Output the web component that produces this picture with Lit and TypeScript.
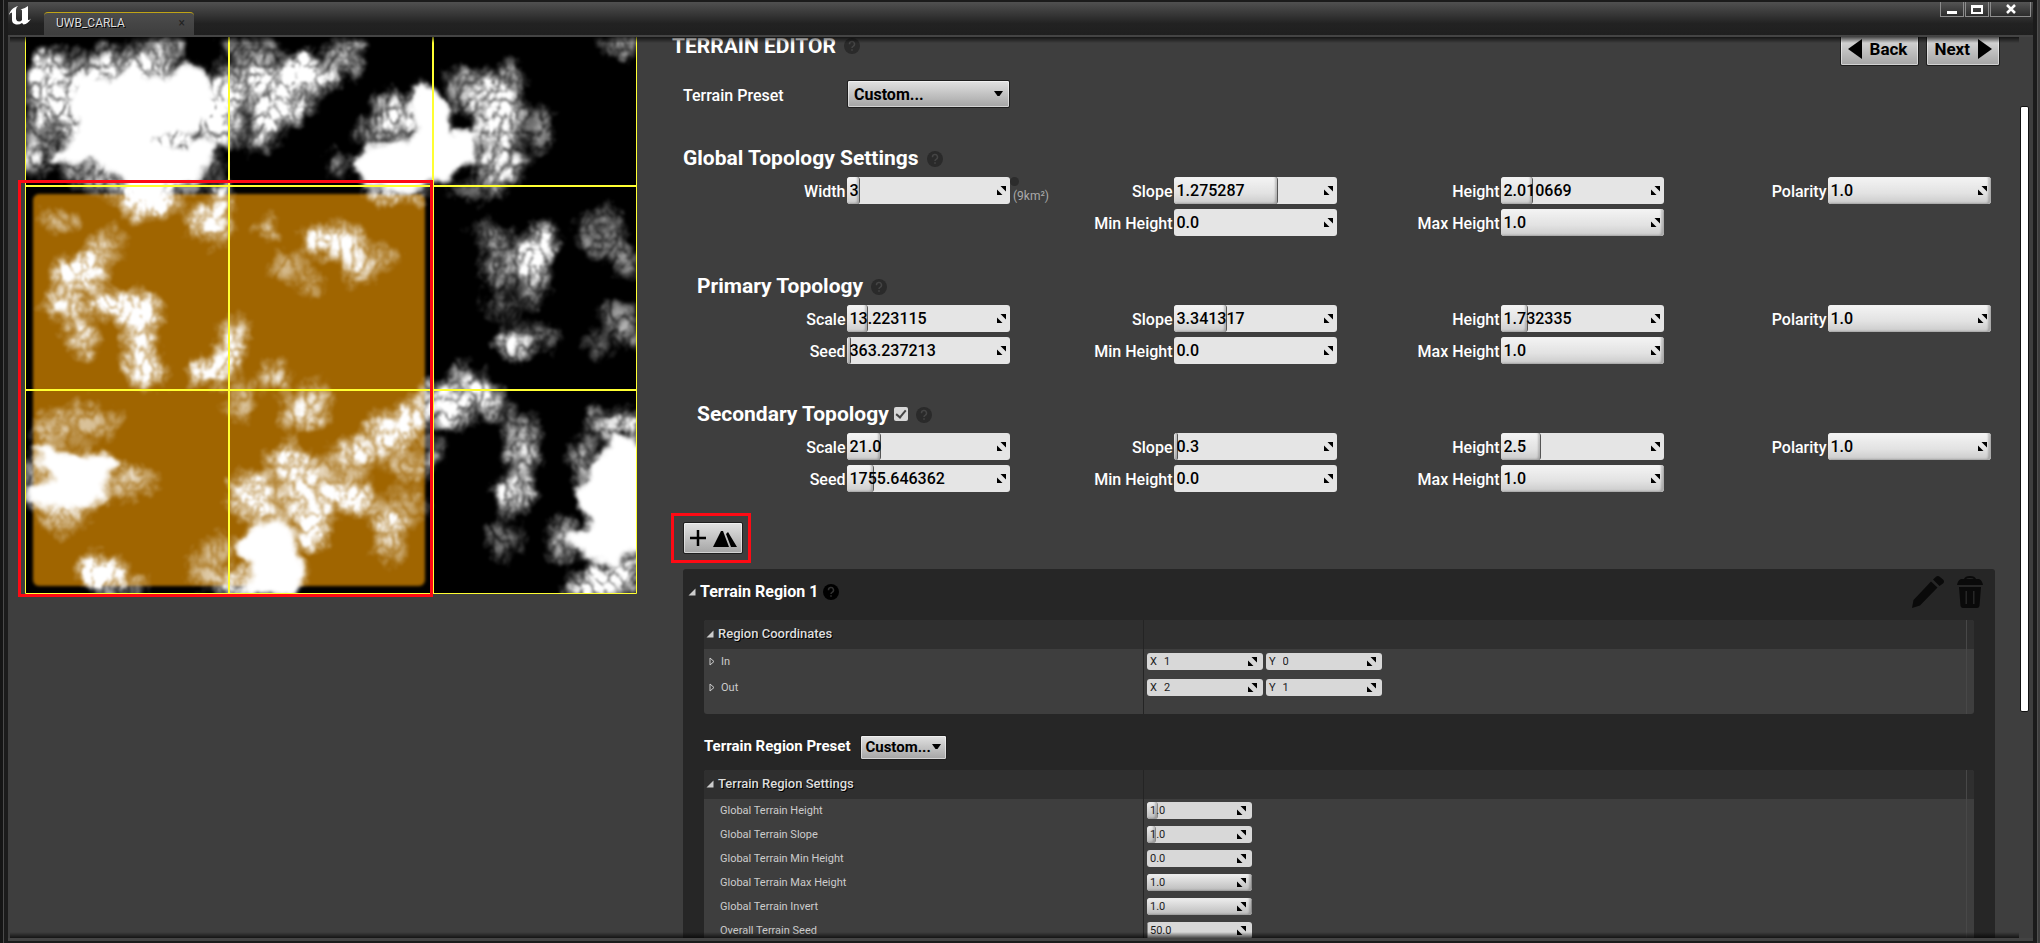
import { LitElement, html, css, svg, nothing } from "lit";
import { customElement } from "lit/decorators.js";

type Blob = [number, number, number, number, number];

const UPPER_SHAPES = [
  "M165,290 L175,235 L215,215 L250,245 L310,210 L350,235 L420,215 L445,180 L490,205 L510,270 L500,330 L465,390 L400,400 L350,425 L440,440 L480,405 L510,440 L490,500 L470,550 L400,560 L390,600 L350,615 L300,570 L290,535 L240,490 L160,490 L120,480 L150,430 L190,370 L170,330Z",
  "M830,500 L870,440 L960,420 L990,390 L970,320 L1000,240 L1030,260 L1080,330 L1070,400 L1135,390 L1130,480 L1070,530 L1020,560 L950,580 L870,550Z",
];
const UPPER_BLOBS: Blob[] = [
  [105, 260, 42, 100, 0.75], [380, 150, 60, 55, 0.6], [530, 300, 40, 100, 0.8], [90, 420, 45, 90, 0.45],
  [80, 480, 30, 40, 0.45], [520, 380, 40, 60, 0.7], [130, 200, 50, 60, 0.45], [260, 180, 90, 40, 0.45],
  [650, 240, 50, 40, 0.9], [720, 210, 42, 44, 1], [765, 240, 36, 26, 1], [820, 170, 50, 60, 0.5],
  [660, 330, 55, 45, 1], [635, 410, 25, 40, 0.65], [600, 150, 70, 50, 0.45], [700, 300, 50, 60, 0.6],
  [590, 250, 40, 60, 0.6], [590, 400, 60, 60, 0.3], [310, 330, 190, 150, 0.7], [330, 500, 190, 90, 0.5],
  [1180, 340, 65, 110, 0.7], [930, 320, 40, 50, 0.55], [1190, 500, 60, 60, 0.65], [1285, 390, 28, 70, 0.45],
  [800, 490, 30, 34, 0.45], [1210, 240, 40, 50, 0.45], [1480, 130, 55, 34, 0.55], [960, 360, 60, 60, 0.6],
  [1110, 260, 60, 60, 0.5], [890, 400, 50, 40, 0.5],
  [1270, 775, 36, 48, 1], [1270, 775, 24, 30, 1], [1290, 715, 38, 50, 0.7], [1190, 780, 50, 90, 0.45], [1270, 860, 30, 40, 0.6],
  [1430, 700, 60, 80, 0.4], [1490, 790, 30, 50, 0.45], [1150, 690, 40, 30, 0.35], [1130, 570, 70, 30, 0.35],
  [355, 600, 70, 50, 1], [485, 660, 42, 42, 0.85], [525, 600, 25, 46, 0.8], [140, 660, 50, 34, 0.42],
  [630, 685, 30, 30, 0.6], [770, 715, 52, 40, 0.95], [830, 730, 35, 50, 0.7], [850, 810, 34, 44, 0.65],
  [680, 800, 40, 44, 0.42], [740, 850, 25, 50, 0.4], [910, 770, 35, 44, 0.42], [185, 820, 58, 42, 1],
  [185, 820, 40, 26, 1], [222, 775, 26, 34, 1], [260, 730, 40, 60, 0.34], [520, 700, 30, 40, 0.5], [940, 580, 70, 30, 0.7],
];
const LOWER_SHAPES = [
  "M85,445 L120,440 L140,465 L250,460 L285,490 L250,540 L250,590 L210,630 L65,610 L62,560 L130,545 L95,500Z",
  "M560,740 L600,670 L660,650 L700,690 L730,830 L700,860 L690,890 L570,890 L600,820Z",
  "M1530,430 L1465,395 L1420,470 L1365,590 L1400,670 L1345,700 L1385,780 L1450,800 L1530,740Z",
];
const LOWER_BLOBS: Blob[] = [
  [150, 10, 44, 40, 0.75], [245, 10, 32, 34, 1], [325, 32, 58, 50, 1], [325, 36, 44, 36, 1], [195, 110, 35, 56, 0.7],
  [335, 130, 38, 80, 0.72], [345, 215, 46, 50, 0.75], [545, 160, 27, 46, 1], [493, 212, 36, 36, 1],
  [560, 95, 34, 50, 0.5], [655, 230, 36, 42, 0.6], [750, 310, 36, 66, 0.6], [700, 340, 36, 50, 0.55],
  [570, 300, 36, 66, 0.42], [200, 365, 90, 54, 0.4], [110, 390, 40, 40, 0.4], [150, 540, 120, 100, 0.45],
  [310, 545, 50, 54, 0.5], [150, 655, 55, 44, 0.5], [240, 815, 52, 48, 1], [240, 820, 34, 30, 1], [290, 860, 70, 40, 0.4],
  [485, 810, 40, 50, 0.42], [520, 740, 40, 40, 0.42], [685, 485, 48, 54, 0.7], [595, 580, 50, 60, 0.9],
  [730, 560, 44, 64, 0.7], [825, 590, 62, 38, 1], [855, 615, 30, 26, 0.9], [745, 680, 34, 72, 1],
  [920, 670, 30, 46, 0.7], [930, 745, 44, 50, 0.42], [925, 395, 56, 60, 0.75], [980, 350, 44, 54, 0.7],
  [840, 450, 42, 30, 0.85], [930, 440, 40, 40, 0.6], [970, 510, 50, 24, 0.6], [800, 505, 90, 40, 0.4],
  [560, 850, 50, 40, 0.75], [650, 620, 90, 70, 0.45], [960, 620, 60, 60, 0.3],
  [1055, 290, 56, 44, 0.8], [1130, 280, 44, 34, 0.8], [1110, 230, 44, 30, 0.5], [1075, 345, 42, 34, 0.85],
  [1170, 315, 40, 40, 0.65], [1025, 460, 22, 50, 0.55], [1240, 400, 44, 60, 0.45], [1240, 480, 36, 60, 0.6],
  [1220, 580, 48, 50, 0.75], [1195, 720, 40, 70, 0.34], [1225, 130, 40, 50, 0.75], [1295, 110, 25, 44, 0.45],
  [1470, 50, 50, 50, 0.42], [1500, 110, 24, 40, 0.5], [1420, 140, 34, 40, 0.34], [1200, 20, 60, 30, 0.36],
  [1450, 840, 50, 50, 0.9], [1390, 860, 46, 34, 0.75], [1385, 480, 30, 80, 0.5], [1445, 370, 44, 44, 0.6],
  [1505, 380, 30, 50, 0.7], [1340, 720, 40, 70, 0.5], [1500, 800, 50, 50, 0.6],
];

const paths = (shapes: string[]) => svg`${shapes.map((d) => svg`<path d=${d}></path>`)}`;
const blobs = (list: Blob[]) => svg`
  ${list.map(([x, y, rx, ry, o]) => svg`<ellipse cx=${x} cy=${y} rx=${rx} ry=${ry} opacity=${o}></ellipse>`)}`;

/** Height map preview with its tile grid and the highlighted region. */
@customElement("terrain-map")
class TerrainMap extends LitElement {
  static styles = css`
    :host { display: block; position: relative; }
    svg { display: block; width: 100%; }
    .mark { position: absolute; left: -7px; top: 143px; right: 204px; bottom: -3px; border: 3px solid #fe0a14; }
  `;

  render() {
    return html`
      <svg viewBox="25 37 612 557" role="img" aria-label="Terrain height map">
        <defs>
          <filter id="terrain" filterUnits="userSpaceOnUse" x="15" y="20" width="640" height="590" color-interpolation-filters="sRGB">
            <feGaussianBlur in="SourceGraphic" stdDeviation="7" result="soft"></feGaussianBlur>
            <feTurbulence type="fractalNoise" baseFrequency="0.06" numOctaves="3" seed="4" result="warp"></feTurbulence>
            <feDisplacementMap in="soft" in2="warp" scale="20" xChannelSelector="R" yChannelSelector="G" result="rough"></feDisplacementMap>
            <feTurbulence type="turbulence" baseFrequency="0.085 0.06" numOctaves="3" seed="11"></feTurbulence>
            <feColorMatrix values="0 0 0 0 1  0 0 0 0 1  0 0 0 0 1  1.9 0 0 0 0" result="veins"></feColorMatrix>
            <feComposite in="rough" in2="veins" operator="arithmetic" k1="1.1" k2="0.65" k3="0" k4="-0.1"></feComposite>
            <feGaussianBlur stdDeviation="1.300"></feGaussianBlur>
          </filter>
          <filter id="peaks" filterUnits="userSpaceOnUse" x="15" y="20" width="640" height="590" color-interpolation-filters="sRGB">
            <feGaussianBlur in="SourceGraphic" stdDeviation="2" result="soft"></feGaussianBlur>
            <feTurbulence type="fractalNoise" baseFrequency="0.05" numOctaves="3" seed="4" result="warp"></feTurbulence>
            <feDisplacementMap in="soft" in2="warp" scale="16" xChannelSelector="R" yChannelSelector="G"></feDisplacementMap>
            <feGaussianBlur stdDeviation="1"></feGaussianBlur>
          </filter>
          <filter id="soften"><feGaussianBlur stdDeviation="1.500"></feGaussianBlur></filter>
        </defs>
        <rect x="25" y="37" width="612" height="557" fill="#000"></rect>
        <rect x="33" y="194" width="392" height="392" rx="6" fill="#a06500" filter="url(#soften)"></rect>
        <g fill="#fff" filter="url(#terrain)">
          <g transform="scale(.4209 .3333)">${blobs(UPPER_BLOBS)}</g>
          <g transform="translate(0 300) scale(.4209 .3333)">${blobs(LOWER_BLOBS)}</g>
        </g>
        <g fill="#fff" filter="url(#peaks)">
          <g transform="scale(.4209 .3333)">${paths(UPPER_SHAPES)}</g>
          <g transform="translate(0 300) scale(.4209 .3333)">${paths(LOWER_SHAPES)}</g>
        </g>
        <path d="M229 37V594M433 37V594M25 186H637M25 390H637" stroke="#ffff32" stroke-width="2"></path>
        <path d="M25.500 37V593.500H636.500V37" stroke="#ffff32" fill="none"></path>
      </svg>
      <div class="mark"></div>
    `;
  }
}

interface Field { label: string; value: string; fill: number; note?: string; }

const f = (label: string, value: string, fill: number, note?: string): Field => ({ label, value, fill, note });

const GLOBAL: (Field | null)[] = [
  f("Width", "3", 8, "(9km²)"), f("Slope", "1.275287", 64), f("Height", "2.010669", 20), f("Polarity", "1.0", 100),
  null, f("Min Height", "0.0", 0), f("Max Height", "1.0", 100),
];
const PRIMARY: Field[] = [
  f("Scale", "13.223115", 13), f("Slope", "3.341317", 33), f("Height", "1.732335", 17), f("Polarity", "1.0", 100),
  f("Seed", "363.237213", 3), f("Min Height", "0.0", 0), f("Max Height", "1.0", 100),
];
const SECONDARY: Field[] = [
  f("Scale", "21.0", 21), f("Slope", "0.3", 3), f("Height", "2.5", 25), f("Polarity", "1.0", 100),
  f("Seed", "1755.646362", 17), f("Min Height", "0.0", 0), f("Max Height", "1.0", 100),
];
const REGION: Field[] = [
  f("Global Terrain Height", "1.0", 10), f("Global Terrain Slope", "1.0", 9), f("Global Terrain Min Height", "0.0", 0),
  f("Global Terrain Max Height", "1.0", 100), f("Global Terrain Invert", "1.0", 100), f("Overall Terrain Seed", "50.0", 1),
];

@customElement("app-root")
class AppRoot extends LitElement {
  static styles = css`
    :host {
      display: flex; flex-direction: column; box-sizing: border-box; height: 100vh; overflow: hidden;
      padding: 2px 7px 2px 8px; background: #1b1b1b; color: #fff; font-family: Roboto, sans-serif;
      box-shadow: inset 3px 0 #151515, inset 4px 0 #4a4a4a, inset -2px 0 #3c3c3c, inset -3px 0 #505050;
    }
    * { box-sizing: border-box; }
    button, input, select { font: inherit; margin: 0; }
    h1, h2, h3, h4 { margin: 0; font-weight: 700; }

    .titlebar { display: flex; height: 33px; flex: none; background: linear-gradient(#505050, #383838 35%, #222 65%, #1f1f1f); }
    .logo { width: 24px; height: 24px; margin-top: 1px; }
    .tab {
      display: flex; align-items: center; justify-content: space-between; align-self: flex-end; width: 150px; height: 23px;
      margin-left: 12px; padding: 0 9px 2px 12px; border-top: 1px solid #c0a416; border-radius: 4px 4px 0 0;
      background: linear-gradient(#4c4c4c, #3e3e3e); color: #ddd; font-size: 12px; text-shadow: 1px 1px #000;
    }
    .close { padding: 0; border: 0; background: none; color: #222; font-size: 12px; line-height: 12px; text-shadow: none; }
    .caption { display: flex; gap: 1px; margin-left: auto; margin-right: 2px; }
    .caption button {
      display: grid; place-items: center; width: 24px; height: 15px; padding: 0; border: 1px solid #8c8c8c; border-top: 0;
      background: linear-gradient(#555, #2c2c2c);
    }
    .caption .exit { width: 41px; }

    .body {
      position: relative; display: flex; flex: 1; min-height: 0; overflow: hidden; border: solid #444; border-width: 2px 0 3px;
      background: #3e3e3e;
    }
    .body::before, .body::after {
      content: ""; position: absolute; z-index: 2; left: 2px; right: 14px; height: 6px; pointer-events: none;
    }
    .body::before { top: 0; background: linear-gradient(#000a, #0000); }
    .body::after { bottom: 0; background: linear-gradient(#0000, #000a); }
    .preview { flex: 0 1 612px; margin-left: 17px; }
    .editor { flex: 1; min-width: 0; margin: -4px 20px 0 35px; }
    .indent { padding-left: 11px; padding-right: 9px; }
    .bar { flex: none; width: 9px; height: 606px; margin: 69px 4px 0 0; border: 1px solid #111; border-radius: 2px; background: #fff; }

    .top { display: flex; align-items: center; gap: 8px; height: 32px; }
    .top h1 { margin-top: -6px; font-size: 21px; line-height: 24px; }
    .top .help { margin-top: -6px; }
    .nav { display: flex; gap: 7px; margin-left: auto; }
    .push {
      display: flex; align-items: center; justify-content: center; gap: 8px; border: 1px solid #1e1e1e; border-radius: 2px;
      background: linear-gradient(#e2e2e2, #a4a4a4); box-shadow: inset 0 0 0 1px #ffffff80; color: #000; font-weight: 700;
    }
    .nav .push { height: 33px; padding: 0 7px; font-size: 17px; }
    .nav .prev { padding-right: 11px; }

    .preset { display: grid; grid-template-columns: 164px 163px; align-items: center; margin-top: 15px; font-size: 16px; font-weight: 500; }
    .preset > label { padding-top: 3px; }
    .drop { position: relative; display: block; }
    .drop select {
      appearance: none; width: 100%; height: 28px; padding: 0 6px; border: 1px solid #1e1e1e; border-radius: 2px; outline: 0;
      background: linear-gradient(#e2e2e2, #a4a4a4); box-shadow: inset 0 0 0 1px #ffffff80; color: #000; font-weight: 700;
    }
    .drop svg { position: absolute; right: 7px; top: 50%; margin-top: -3px; pointer-events: none; }

    .group { margin-top: 36px; }
    .heading { display: flex; align-items: center; gap: 8px; height: 28px; margin-bottom: 5px; }
    .heading.inner { padding-left: 14px; }
    .heading h2 { font-size: 21px; line-height: 24px; }
    .heading .help { margin-top: 2px; }
    .fields { display: grid; grid-template-columns: repeat(4, 1fr); row-gap: 5px; }
    .field { position: relative; display: grid; grid-template-columns: 1fr 1fr; align-items: center; }
    .field > label { padding: 3px 1px 0 0; font-size: 16px; line-height: 20px; font-weight: 500; text-align: right; }
    .note { position: absolute; left: 100%; bottom: 0; padding-left: 3px; color: #aaa; font-size: 12px; line-height: 16px; }
    .dot { position: absolute; left: 100%; top: 0; width: 9px; height: 9px; border-radius: 5px; background: #2c2c2c; }

    .spin { position: relative; display: flex; align-items: center; overflow: hidden; height: 27px; border-radius: 3px; background: #e5e5e5; }
    .spin input {
      position: relative; width: 100%; min-width: 0; height: 100%; padding: 0 0 0 3px; border: 0; outline: 0; background: none;
      color: #000; font-size: 16px; font-weight: 500;
    }
    .fill {
      position: absolute; left: 0; top: 0; bottom: 0; border-right: 1px solid #555; border-radius: 3px;
      background: linear-gradient(#f4f4f4, #e2e2e2 60%, #cacaca); box-shadow: inset -2px -1px 2px #0003;
    }
    .fill.full { border-right-color: #aaa; }
    .arrows { position: relative; flex: none; margin-right: 4px; }
    .small.spin { width: 105px; height: 17px; background: #d8d8d8; }
    .small.spin.coord { width: 116px; }
    .small.spin input { color: #1c1c1c; font-size: 11px; font-weight: 400; }
    .small .arrows { margin-right: 6px; }
    .small .fill { border-right-color: #888; background: linear-gradient(#eee, #bbb); }
    .axis { position: relative; padding-left: 3px; color: #1c1c1c; font-size: 11px; }
    .small .axis + input { padding-left: 7px; }

    .check {
      appearance: none; width: 14px; height: 14px; margin-left: -3px; border-radius: 2px; background: #d8d8d8;
      display: grid; place-items: center;
    }
    .check::before { content: ""; width: 4px; height: 8px; margin-top: -2px; border: solid #444; border-width: 0 2px 2px 0; transform: rotate(40deg); }

    .add { position: relative; display: inline-block; margin-top: 30px; }
    .add .push { width: 60px; height: 32px; gap: 7px; padding: 0; }
    .add::after { content: ""; position: absolute; inset: -9px -8px -9px -12px; border: 3px solid #fe0a14; pointer-events: none; }

    .panel { margin: 15px 5px 0 11px; padding: 0 21px; border-radius: 3px; background: #262626; }
    .panelhead { display: flex; align-items: center; height: 51px; margin: 0 -9px 0 -16px; padding-bottom: 5px; }
    .panelhead h3 { margin: 0 5px 0 4px; font-size: 16px; line-height: 20px; }
    .tools { display: flex; gap: 12px; margin-left: auto; }
    .tools button { display: block; padding: 0; border: 0; background: none; }
    .tools svg { display: block; }

    .details { overflow: hidden; border-radius: 3px; background: #3e3e3e; }
    .row { display: grid; grid-template-columns: 440px 1fr; align-items: stretch; height: 24px; }
    .row > * { display: flex; align-items: center; padding-bottom: 2px; }
    .name { padding-left: 16px; border-right: 1px solid #242424; color: #ccc; font-size: 11px; }
    .value { gap: 3px; padding-left: 3px; margin-right: 7px; border-right: 1px solid #484848; }
    .coords .row { height: 26px; }
    .coords .name { gap: 6px; padding-left: 5px; }
    .row.head { height: 29px; background: #2f2f2f; }
    .row.head .name { gap: 4px; padding-left: 2px; }
    .head h4 { color: #ddd; font-size: 13px; font-weight: 500; text-shadow: 1px 1px #000; }
    .coords .row.head { height: 29px; }
    .coords .row.rest { height: 13px; }
    .regionpreset { display: flex; align-items: center; gap: 10px; height: 56px; padding-top: 10px; font-size: 15px; font-weight: 700; }
    .regionpreset > label { padding-bottom: 2px; }
    .regionpreset .drop select { width: 87px; height: 25px; padding: 0 4px; font-size: 15px; }
    .regionpreset .drop svg { right: 6px; }
  `;

  private help(fill = "#2a2a2a", ink = "#454545") {
    return html`<svg class="help" width="16" height="16" viewBox="0 0 16 16" aria-hidden="true">
      <circle cx="8" cy="8" r="8" fill=${fill}></circle>
      <path d="M5.500 6.200a2.500 2.500 0 1 1 3.600 2.100q-1.100.6-1.100 1.700M8 11.300v1.500" fill="none" stroke=${ink} stroke-width="1.500"></path>
    </svg>`;
  }

  private arrows() {
    return html`<svg class="arrows" width="9" height="9" viewBox="0 0 9 9" aria-hidden="true">
      <path d="M3.500 0H9V5.500ZM0 3.500V9H5.500Z" fill="#000"></path>
    </svg>`;
  }

  private spin(id: string, value: string, fill: number, small = false) {
    return html`<div class="spin ${small ? "small" : ""}">
      ${fill ? html`<span class="fill ${fill === 100 ? "full" : ""}" style="width:${fill}%"></span>` : nothing}
      <input id=${id} type="text" .value=${value} />
      ${this.arrows()}
    </div>`;
  }

  private fields(prefix: string, list: (Field | null)[]) {
    return html`<div class="fields">
      ${list.map((item, i) => item
        ? html`<div class="field">
            <label for="${prefix}${i}">${item.label}</label>
            ${this.spin(`${prefix}${i}`, item.value, item.fill)}
            ${item.note ? html`<span class="dot"></span><span class="note">${item.note}</span>` : nothing}
          </div>`
        : html`<div></div>`)}
    </div>`;
  }

  private drop(id: string) {
    return html`<span class="drop">
      <select id=${id}><option>Custom...</option></select>
      <svg width="9" height="6" viewBox="0 0 9 6" aria-hidden="true"><path d="M0 0H9L5.500 5H3.500Z" fill="#000"></path></svg>
    </span>`;
  }

  private openTri() {
    return html`<svg class="tri" width="8" height="8" viewBox="0 0 8 8" aria-hidden="true"><path d="M7.500 0.500V7.500H0.500Z" fill="#ccc"></path></svg>`;
  }

  private coord(name: string, values: [string, string]) {
    return html`<div class="row">
      <div class="name">
        <svg width="6" height="9" viewBox="0 0 6 9" aria-hidden="true"><path d="M1 1L5 4.500 1 8Z" fill="none" stroke="#ccc"></path></svg>
        <span>${name}</span>
      </div>
      <div class="value">
        ${["X", "Y"].map((axis, i) => html`<div class="spin small coord">
          <label class="axis" for="${name}${axis}">${axis}</label>
          <input id="${name}${axis}" type="text" .value=${values[i]} />
          ${this.arrows()}
        </div>`)}
      </div>
    </div>`;
  }

  private head(title: string) {
    return html`<div class="row head"><div class="name">${this.openTri()}<h4>${title}</h4></div><div class="value"></div></div>`;
  }

  render() {
    return html`
      <header class="titlebar">
        <svg class="logo" viewBox="0 0 24 24" aria-hidden="true">
          <path d="M1 12C2 7 6 4 10 3Q8 4.500 8 7V16Q8.500 18.500 11 18.500 13 18.500 14 17V7.500Q14 6.500 12.500 6.500 17 5.500 20 3V16.500Q20.500 18 23 15.500 20 21 15.500 21.500L14 20Q11 22 8 21.500 4 20.500 4 17V10Q3.500 8.500 1 12Z" fill="#fff"></path>
        </svg>
        <div class="tab"><span>UWB_CARLA</span><button class="close" aria-label="Close tab">×</button></div>
        <div class="caption">
          <button aria-label="Minimize"><svg width="12" height="11"><path d="M1 7H11V10H1Z" fill="#fff"></path></svg></button>
          <button aria-label="Maximize"><svg width="12" height="11"><path d="M0 1H12V10H0ZM2 4V8H10V4Z" fill="#fff" fill-rule="evenodd"></path></svg></button>
          <button class="exit" aria-label="Close"><svg width="12" height="11"><path d="M2 1L10 9M10 1L2 9" stroke="#fff" stroke-width="2.500"></path></svg></button>
        </div>
      </header>
      <main class="body">
        <div class="preview"><terrain-map></terrain-map></div>
        <div class="editor">
          <div class="top">
            <h1>TERRAIN EDITOR</h1>${this.help()}
            <div class="nav">
              <button class="push prev"><svg width="14" height="20"><path d="M14 0V20L0 10Z"></path></svg>Back</button>
              <button class="push">Next<svg width="14" height="20"><path d="M0 0V20L14 10Z"></path></svg></button>
            </div>
          </div>
          <div class="indent">
            <div class="preset"><label for="preset">Terrain Preset</label>${this.drop("preset")}</div>
            <section class="group">
              <div class="heading"><h2>Global Topology Settings</h2>${this.help()}</div>
              ${this.fields("g", GLOBAL)}
            </section>
            <section class="group">
              <div class="heading inner"><h2>Primary Topology</h2>${this.help()}</div>
              ${this.fields("p", PRIMARY)}
            </section>
            <section class="group">
              <div class="heading inner">
                <h2><label for="secondary">Secondary Topology</label></h2>
                <input class="check" id="secondary" type="checkbox" checked />${this.help()}
              </div>
              ${this.fields("s", SECONDARY)}
            </section>
            <div class="add">
              <button class="push" aria-label="Add terrain region">
                <svg width="16" height="16"><path d="M8 0V16M0 8H16" stroke="#000" stroke-width="2.500"></path></svg>
                <svg width="24" height="17"><path d="M0 17L8 1H10L16 17ZM13 4L15 2 24 17H18Z"></path></svg>
              </button>
            </div>
          </div>
          <section class="panel">
            <div class="panelhead">
              ${this.openTri()}<h3>Terrain Region 1</h3>${this.help("#000", "#333")}
              <div class="tools">
                <button aria-label="Edit region"><svg width="34" height="32" viewBox="0 0 34 32"><path d="M1 32L2.500 24 20 5.500 26.500 11.500 9 29.500ZM22 3.500L25 .8Q27-.8 29 1L32 3.500Q34 5.500 32 7.500L28.500 10Z" fill="#0a0a0a"></path></svg></button>
                <button aria-label="Delete region"><svg width="26" height="32" viewBox="0 0 26 32"><path d="M7 3Q8 0 13 0T19 3H22Q25 4 26 9H0Q1 4 4 3ZM9 3H17Q16 2 13 2T9 3ZM2 11H24L22.500 30Q22 32 20 32H6Q4 32 3.500 30ZM8.500 15V28H10V15ZM16 15V28H17.500V15Z" fill="#0a0a0a" fill-rule="evenodd"></path></svg></button>
              </div>
            </div>
            <div class="details coords">
              ${this.head("Region Coordinates")}
              ${this.coord("In", ["1", "0"])}
              ${this.coord("Out", ["2", "1"])}
              <div class="row rest"><div class="name"></div><div class="value"></div></div>
            </div>
            <div class="regionpreset"><label for="rpreset">Terrain Region Preset</label>${this.drop("rpreset")}</div>
            <div class="details">
              ${this.head("Terrain Region Settings")}
              ${REGION.map((item, i) => html`<div class="row">
                <label class="name" for="r${i}">${item.label}</label>
                <div class="value">${this.spin(`r${i}`, item.value, item.fill, true)}</div>
              </div>`)}
            </div>
          </section>
        </div>
        <div class="bar"></div>
      </main>
    `;
  }
}
